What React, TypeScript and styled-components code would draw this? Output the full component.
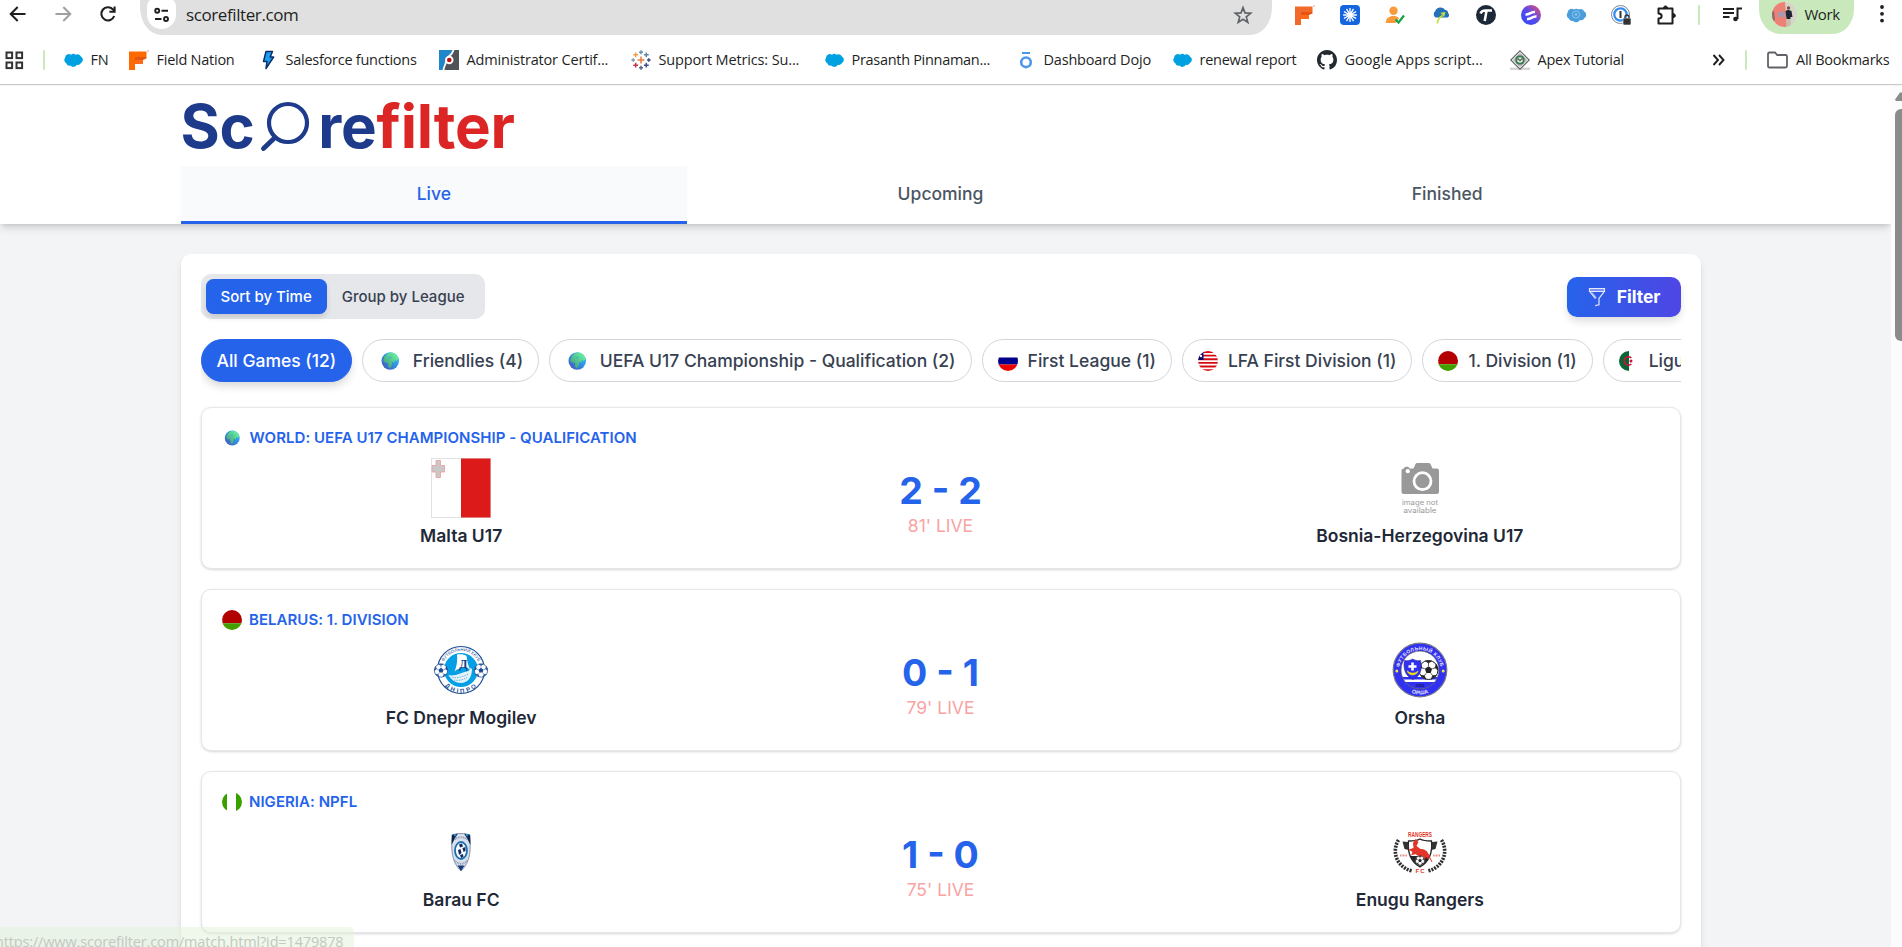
import React from "react";
import styled, { createGlobalStyle, css } from "styled-components";

const GlobalStyle = createGlobalStyle`
  * { box-sizing: border-box; }
  html, body { margin: 0; padding: 0; }
  body { background: #f3f4f6; overflow: hidden; font-family: Inter, sans-serif; }
  svg { display: block; flex: none; }
  button { font: inherit; border: 0; padding: 0; background: none; color: inherit; }
`;

const chromeFont = `"Open Sans", "Noto Sans", sans-serif`;

/* ---------- browser chrome ---------- */

const Window = styled.div`
  width: 1902px;
  height: 947px;
  display: flex;
  flex-direction: column;
  overflow: hidden;
  position: relative;
`;

const Toolbar = styled.div`
  height: 35px;
  flex: none;
  display: flex;
  align-items: flex-start;
  background: #fff;
  font-family: ${chromeFont};
`;

const NavButtons = styled.div`
  width: 140px;
  height: 28px;
  padding-left: 7.5px;
  display: flex;
  align-items: center;
  gap: 25px;
`;

const AddressBar = styled.div`
  width: 1132px;
  height: 35px;
  padding: 0 19px 6px 7px;
  display: flex;
  align-items: center;
  background: #e0e0e0;
  border-radius: 0 0 21px 21px / 0 0 28px 28px;
`;

const SiteInfo = styled.span`
  width: 29px;
  height: 29px;
  margin-right: 10px;
  display: flex;
  align-items: center;
  justify-content: center;
  background: #fff;
  border-radius: 4px 4px 15px 15px / 8px 8px 15px 15px;
`;

const Url = styled.span`
  flex: 1;
  font-size: 17px;
  letter-spacing: -0.4px;
  color: #1f1f1f;
  line-height: 29px;
`;

const Extensions = styled.div`
  height: 29px;
  margin-left: 23px;
  display: flex;
  align-items: center;
  gap: 25.2px;
`;

const Separator = styled.span<{ $gap?: string }>`
  width: 2.5px;
  height: 20px;
  flex: none;
  margin: ${(p) => p.$gap ?? "0"};
  background: #c9e9bd;
  border-radius: 2px;
`;

const Profile = styled.span`
  width: 95px;
  height: 34px;
  margin-left: 17px;
  padding: 0 0 6px 13px;
  display: flex;
  align-items: center;
  gap: 7px;
  background: #c9e9bd;
  border-radius: 0 0 21px 21px / 0 0 25px 25px;
  font-size: 15px;
  letter-spacing: -0.4px;
  color: #1f1f1f;
`;

const MenuDots = styled.span`
  height: 28px;
  width: 47px;
  display: flex;
  align-items: center;
  justify-content: center;
  padding-left: 8px;
`;

const BookmarkBar = styled.div`
  height: 50px;
  flex: none;
  display: flex;
  align-items: center;
  background: #fff;
  border-bottom: 1px solid #c8c8c8;
  font-family: ${chromeFont};
  font-size: 14.5px;
  color: #1f1f1f;
  padding: 1px 0 0 5px;
  margin-bottom: 1px;
`;

const Bookmark = styled.span<{ $w: number; $track?: number }>`
  width: ${(p) => p.$w}px;
  flex: none;
  display: flex;
  align-items: center;
  gap: 8px;
  white-space: nowrap;
  line-height: 20px;
  letter-spacing: ${(p) => p.$track ?? -0.25}px;
`;

const Overflow = styled.span`
  width: 36px;
  padding-left: 3px;
`;

/* ---------- page ---------- */

const Viewport = styled.div`
  flex: 1;
  min-height: 0;
  display: flex;
  background: #fff;
`;

const Page = styled.div`
  width: 1891px;
  display: flex;
  flex-direction: column;
  overflow: hidden;
  background: #f3f4f6;
`;

const Scrollbar = styled.div`
  width: 11px;
  padding: 6px 0 0 4px;
  background: #fcfcfc;
  display: flex;
  flex-direction: column;
  gap: 8px;
`;

const Thumb = styled.div`
  height: 232px;
  background: #8b8b8b;
  border-radius: 6px 0 0 6px;
`;

const Header = styled.header`
  height: 138px;
  flex: none;
  padding: 0 190.5px 0 180.5px;
  background: #fff;
  box-shadow: 0 5px 8px -1px rgba(0, 0, 0, 0.13), 0 2px 5px -2px rgba(0, 0, 0, 0.13);
  z-index: 1;
`;

const Logo = styled.div`
  height: 80px;
  padding-top: 10px;
  display: flex;
  font-size: 60px;
  line-height: 60px;
  font-weight: 700;
  letter-spacing: -0.2px;
  color: #1e3a8a;
`;

const LogoAccent = styled.span`
  color: #dc2626;
`;

const Tabs = styled.nav`
  display: grid;
  grid-template-columns: repeat(3, 1fr);
`;

const Tab = styled.button<{ $active?: boolean }>`
  height: 58px;
  font-size: 17.5px;
  line-height: 25px;
  font-weight: 500;
  color: ${(p) => (p.$active ? "#2563eb" : "#4b5563")};
  background: ${(p) => (p.$active ? "#f9fafc" : "transparent")};
  border-bottom: 3px solid ${(p) => (p.$active ? "#2563eb" : "transparent")};
`;

const Panel = styled.main`
  margin: 30px 190.5px 0 180.5px;
  padding: 20px;
  flex: none;
  height: 800px;
  display: flex;
  flex-direction: column;
  background: #fff;
  border-radius: 10px;
  box-shadow: 0 5px 8px -1px rgba(0, 0, 0, 0.1), 0 2px 5px -2px rgba(0, 0, 0, 0.1);
`;

const Controls = styled.div`
  height: 45px;
  display: flex;
  align-items: center;
  justify-content: space-between;
`;

const Toggle = styled.div`
  display: flex;
  padding: 5px;
  background: #e5e7eb;
  border-radius: 10px;
`;

const ToggleOption = styled.button<{ $active?: boolean }>`
  height: 35px;
  padding: 0 15px;
  border-radius: 7.5px;
  font-size: 15px;
  font-weight: 500;
  color: #374151;
  ${(p) =>
    p.$active &&
    css`
      color: #fff;
      background: #2563eb;
      box-shadow: 0 4px 6px -1px rgba(0, 0, 0, 0.15);
    `}
`;

const FilterButton = styled.button`
  height: 40px;
  padding: 0 20px;
  display: flex;
  align-items: center;
  gap: 10px;
  border-radius: 10px;
  font-size: 17.5px;
  font-weight: 700;
  color: #fff;
  background: linear-gradient(90deg, #2563eb, #4f46e5);
  box-shadow: 0 5px 8px -1px rgba(0, 0, 0, 0.14);
`;

const Pills = styled.div`
  height: 55px;
  margin: 20px 0 13px;
  display: flex;
  align-items: flex-start;
  gap: 10px;
  overflow: hidden;
`;

const Pill = styled.button<{ $active?: boolean }>`
  height: 43px;
  flex: none;
  padding: 0 15px;
  display: flex;
  align-items: center;
  gap: 10px;
  border: 1px solid #d1d5db;
  border-radius: 22px;
  font-size: 17.5px;
  font-weight: 500;
  white-space: nowrap;
  color: #374151;
  background: #fff;
  ${(p) =>
    p.$active &&
    css`
      color: #fff;
      background: #2563eb;
      border-color: #2563eb;
      box-shadow: 0 5px 8px -1px rgba(0, 0, 0, 0.16);
    `}
`;

const MatchList = styled.div`
  display: flex;
  flex-direction: column;
  gap: 20px;
`;

const MatchCard = styled.article`
  height: 162px;
  padding: 20px;
  border: 1px solid #e5e7eb;
  border-radius: 10px;
  background: #fff;
  box-shadow: 0 1px 3px rgba(0, 0, 0, 0.12), 0 1px 2px -1px rgba(0, 0, 0, 0.12);
`;

const League = styled.div`
  height: 20px;
  margin-bottom: 10px;
  display: flex;
  align-items: center;
  gap: 7.5px;
  font-size: 15px;
  line-height: 20px;
  font-weight: 600;
  letter-spacing: 0.04px;
  text-transform: uppercase;
  color: #2563eb;
`;

const MatchRow = styled.div`
  display: grid;
  grid-template-columns: repeat(3, 1fr);
  align-items: center;
`;

const Team = styled.div`
  display: flex;
  flex-direction: column;
  align-items: center;
  gap: 5px;
  font-size: 17.5px;
  line-height: 25px;
  font-weight: 600;
  color: #1f2937;
`;

const Score = styled.div`
  text-align: center;
  font-size: 37.5px;
  line-height: 45px;
  font-weight: 700;
  color: #2563eb;
`;

const Minute = styled.div`
  text-align: center;
  font-size: 17.5px;
  line-height: 25px;
  color: #f9a3a3;
`;

const StatusBubble = styled.div`
  position: absolute;
  left: 0;
  bottom: 0;
  z-index: 3;
  width: 354px;
  height: 20px;
  overflow: hidden;
  border-radius: 0 5px 0 0;
  background: rgba(226, 242, 219, 0.55);
  font-family: ${chromeFont};
  font-size: 14.5px;
  letter-spacing: -0.15px;
  line-height: 29px;
  white-space: nowrap;
  color: #c3c8c2;
`;

const StatusText = styled.span`
  margin-left: -5px;
`;

/* ---------- small icons ---------- */

const ArrowIcon = ({ flip, color }: { flip?: boolean; color: string }) => (
  <svg width="20" height="20" viewBox="0 0 20 20" fill="none" stroke={color} strokeWidth="2">
    <path d={flip ? "M2.5 10H17M10.3 3l7 7-7 7" : "M17.5 10H3M9.7 3l-7 7 7 7"} />
  </svg>
);

const ReloadIcon = () => (
  <svg width="20" height="20" viewBox="0 0 20 20" fill="none" stroke="#1f1f1f" strokeWidth="2.1">
    <path d="M16.2 12A6.6 6.6 0 1 1 14.8 5.3L16.5 7" />
    <path d="M16.6 2.5v5.2h-5.2" />
  </svg>
);

const TuneIcon = () => (
  <svg width="18" height="18" viewBox="0 0 18 18" fill="none" stroke="#1f1f1f" strokeWidth="1.9">
    <circle cx="4.2" cy="4.8" r="2" />
    <path d="M8.500 4.800h6.500M2 13h6.500" />
    <circle cx="13" cy="13" r="2" />
  </svg>
);

const StarIcon = () => (
  <svg width="20" height="20" viewBox="0 0 20 20" fill="none" stroke="#5f6368" strokeWidth="1.7">
    <path d="M10 2.600l2 5.300 5.700.4-4.400 3.600 1.500 5.500-4.800-3.100-4.800 3.100 1.500-5.500-4.400-3.600 5.700-.4z" />
  </svg>
);

const FieldNationIcon = ({ small }: { small?: boolean }) => (
  <svg width="20" height="20" viewBox="0 0 20 20">
    <path d="M0 1.5h17.5V7H0z" fill={small ? "#f26a2a" : "#ff6a00"} />
    <path d="M0 7h6v13H0z" fill={small ? "#f26a2a" : "#ff6a00"} />
    <path d="M6 9h8v5H6z" fill="#ff6a1a" />
    <path d="M6 7h11.5v1.6L13.8 10H6z" fill="#e4560f" />
    <circle cx="19" cy="1" r=".7" fill="#c88" />
  </svg>
);

const SunburstIcon = () => (
  <svg width="20" height="20" viewBox="0 0 20 20">
    <rect width="20" height="20" rx="4" fill="#1565e0" />
    <g stroke="#fff" strokeWidth="1.4" strokeLinecap="round">
      {[0, 30, 60, 90, 120, 150, 180, 210, 240, 270, 300, 330].map((a) => (
        <path key={a} d="M10 8V3.6" transform={`rotate(${a} 10 10)`} />
      ))}
    </g>
    <circle cx="10" cy="10" r="2.4" fill="#fff" />
  </svg>
);

const PersonCheckIcon = () => (
  <svg width="20" height="20" viewBox="0 0 20 20">
    <circle cx="8.5" cy="5.8" r="4.2" fill="#fb9a3c" />
    <path d="M.8 18c0-5 3.5-7 7.4-7 2.6 0 4.6.6 5.8 2.2L10.5 18z" fill="#fb9a3c" />
    <path d="M10.5 14.5l3 3 5.5-7" fill="none" stroke="#12a34a" strokeWidth="2.2" />
  </svg>
);

const CloudArrowIcon = () => (
  <svg width="20" height="20" viewBox="0 0 20 20">
    <path d="M4.500 12.500a3.800 3.800 0 0 1-.3-6.200A5.500 5.500 0 0 1 14 4.800a3.800 3.800 0 0 1 3.200 3.500 2.500 2.500 0 0 1-.6 4.200z" fill="#2570b8" />
    <path d="M6.500 18.500c0-4 1.500-6 5-8" fill="none" stroke="#c6e03a" strokeWidth="1.700" />
    <path d="M9.500 7.800l5-.8-1.500 5z" fill="#c6e03a" />
  </svg>
);

const TIcon = () => (
  <svg width="20" height="20" viewBox="0 0 20 20">
    <circle cx="10" cy="10" r="10" fill="#1d2939" />
    <path d="M4.500 8.500c1-3 3-3 5-3H16M10.500 6l-1.800 10" stroke="#fff" strokeWidth="2.500" fill="none" />
  </svg>
);

const PurpleIcon = () => (
  <svg width="20" height="20" viewBox="0 0 20 20">
    <defs>
      <linearGradient id="pg" x1="0" y1="1" x2="1" y2="0">
        <stop offset="0" stopColor="#2a4bff" />
        <stop offset=".5" stopColor="#5a4ae8" />
        <stop offset="1" stopColor="#f0506e" />
      </linearGradient>
    </defs>
    <circle cx="10" cy="10" r="10" fill="url(#pg)" />
    <path d="M4.500 9.500c4 .5 5-3 9.500-2.500M6 14c4 .5 5-3 9.500-2.500" stroke="#fff" strokeWidth="2.600" fill="none" />
  </svg>
);

const cloudPath =
  "M7.800 4.600A4 4 0 0 1 12.600 4.500a4 4 0 0 1 5.600 1.900 3.800 3.800 0 0 1 .3 6.600 3.900 3.900 0 0 1-4.600 2 4.200 4.200 0 0 1-6.800 1 4 4 0 0 1-4.300-2.600A3.700 3.700 0 0 1 1.600 7.800a3.900 3.900 0 0 1 6.200-3.200z";

const CloudIcon = () => (
  <svg width="20" height="20" viewBox="-0.600 -0.400 21 21">
    <path d={cloudPath} fill="#00a1e0" />
  </svg>
);

const PaleCloudIcon = () => (
  <svg width="20" height="20" viewBox="0 0 20 20">
    <path d={cloudPath} fill="#4a9edb" />
    <circle cx="10" cy="9.500" r="3.600" fill="none" stroke="#8cc4ec" />
    <circle cx="10" cy="9.500" r="1.300" fill="#8cc4ec" />
  </svg>
);

const VaultIcon = () => (
  <svg width="20" height="20" viewBox="0 0 20 20">
    <circle cx="9.500" cy="9.500" r="9" fill="#fff" stroke="#7c8794" />
    <circle cx="9.500" cy="9.500" r="6.200" fill="none" stroke="#2f8df5" strokeWidth="2.200" />
    <path d="M9.500 6v7" stroke="#333" strokeWidth="2" />
    <rect x="12" y="13" width="8" height="7" rx="1" fill="#333" stroke="#fff" strokeWidth=".6" />
    <path d="M14 13v-1a2 2 0 0 1 4 0v1" fill="none" stroke="#333" strokeWidth="1.300" />
  </svg>
);

const PuzzleIcon = () => (
  <svg width="20" height="20" viewBox="0 0 20 20" fill="none" stroke="#1f1f1f" strokeWidth="2" strokeLinejoin="round">
    <path d="M1.500 3.500h14v15h-14v-5c4.200 0 4.200-5 0-5z" />
    <path d="M6.500 3.200c0-3 4-3 4 0z" fill="#1f1f1f" strokeWidth="1" />
    <path d="M16 8.600c3.200 0 3.200 4 0 4z" fill="#1f1f1f" strokeWidth="1" />
  </svg>
);

const QueueMusicIcon = () => (
  <svg width="20" height="20" viewBox="0 0 20 20" fill="none" stroke="#1f1f1f" strokeWidth="2">
    <path d="M1 4h11M1 8h11M1 12h6.500" />
    <path d="M15.500 14V3.500H20" />
    <circle cx="13.500" cy="14" r="2.300" fill="#1f1f1f" stroke="none" />
  </svg>
);

const Avatar = () => (
  <svg width="25" height="25" viewBox="0 0 25 25">
    <clipPath id="av"><circle cx="12.500" cy="12.500" r="12.500" /></clipPath>
    <g clipPath="url(#av)">
      <rect width="25" height="25" fill="#d9d4c9" />
      <path d="M0 0h13l2 25H0z" fill="#ee8176" />
      <rect x="6" y="10" width="7" height="5" fill="#a79ab0" />
      <path d="M13.500 9l2.500-1.200L19.500 9l1 6h-2v2h-4z" fill="#1d2432" />
      <circle cx="16.500" cy="6" r="1.700" fill="#7a5044" />
      <path d="M14.500 17h4l.5 8h-5z" fill="#c7bfae" />
      <path d="M0 10l2-1 1 9-3 2z" fill="#8e6a6a" />
    </g>
  </svg>
);

const DotsIcon = () => (
  <svg width="6" height="20" viewBox="0 0 6 20" fill="#1f1f1f">
    <circle cx="3" cy="3" r="1.900" /><circle cx="3" cy="9.800" r="1.900" /><circle cx="3" cy="16.600" r="1.900" />
  </svg>
);

const AppsIcon = () => (
  <svg width="19" height="19" viewBox="0 0 19 19" fill="none" stroke="#333" strokeWidth="2">
    <rect x="1.500" y="1.500" width="5.600" height="5.600" /><rect x="11.500" y="1.500" width="5.600" height="5.600" />
    <rect x="1.500" y="11.500" width="5.600" height="5.600" /><rect x="11.500" y="11.500" width="5.600" height="5.600" />
  </svg>
);

const BoltIcon = () => (
  <svg width="20" height="20" viewBox="0 0 20 20">
    <path d="M8 1.500h6.500L12.200 7H15.600L8 18.500l1-7H5.500z" fill="#1ba0f0" stroke="#0b2f6b" strokeWidth="1.500" strokeLinejoin="round" />
  </svg>
);

const AdminIcon = () => (
  <svg width="20" height="20" viewBox="0 0 20 20">
    <rect width="20" height="20" fill="#4f5357" />
    <path d="M0 0h15L8 9 5 20H0z" fill="#1d87c9" />
    <path d="M14.500 0C13 6 8 6 7.500 10c-.3 4-3 7-3 10" fill="none" stroke="#fff" strokeWidth="1.800" />
    <circle cx="10.300" cy="10" r="4.200" fill="#fff" />
    <circle cx="10.300" cy="10" r="2.300" fill="#c00d12" />
  </svg>
);

const TableauIcon = () => {
  const plus = (x: number, y: number, r: number, c: string) => (
    <path key={`${x}-${y}`} d={`M${x - r} ${y}h${2 * r}M${x} ${y - r}v${2 * r}`} stroke={c} strokeWidth="1.500" />
  );
  return (
    <svg width="20" height="20" viewBox="0 0 20 20">
      {plus(10, 10, 3.4, "#eb7a3c")}
      {plus(10, 2.2, 2, "#6f93a8")}
      {plus(10, 17.8, 2, "#5a6591")}
      {plus(2.2, 10, 1.8, "#7ba0b5")}
      {plus(17.8, 10, 1.8, "#3c4f8a")}
      {plus(4.7, 4.8, 2.4, "#f0a04a")}
      {plus(15.3, 4.8, 2.4, "#5f8ba0")}
      {plus(4.7, 15.2, 2.4, "#c8334c")}
      {plus(15.3, 15.2, 2.4, "#3c4f8a")}
    </svg>
  );
};

const DojoIcon = () => (
  <svg width="20" height="20" viewBox="0 0 20 20" fill="none" stroke="#4d96ea">
    <path d="M6 3h8" strokeWidth="2" />
    <ellipse cx="10" cy="12.300" rx="4.800" ry="4.800" strokeWidth="2.600" />
  </svg>
);

const GithubIcon = () => (
  <svg width="20" height="20" viewBox="0 0 16 16" fill="#24292f">
    <path d="M8 0C3.580 0 0 3.580 0 8c0 3.540 2.290 6.530 5.470 7.590.4.070.55-.17.55-.38 0-.19-.01-.82-.01-1.490-2.010.37-2.530-.49-2.690-.94-.09-.23-.48-.94-.82-1.130-.28-.15-.68-.52-.01-.53.63-.01 1.080.58 1.230.82.72 1.210 1.870.87 2.330.66.07-.52.28-.87.51-1.070-1.780-.2-3.640-.89-3.640-3.950 0-.87.31-1.590.82-2.150-.08-.2-.36-1.020.08-2.120 0 0 .67-.21 2.200.82.64-.18 1.320-.27 2-.27s1.360.09 2 .27c1.530-1.040 2.200-.82 2.200-.82.44 1.100.16 1.920.08 2.120.51.56.82 1.270.82 2.150 0 3.070-1.870 3.750-3.650 3.950.29.25.54.73.54 1.480 0 1.070-.01 1.930-.01 2.200 0 .21.15.46.55.38A8.010 8.010 0 0 0 16 8c0-4.420-3.580-8-8-8z" />
  </svg>
);

const ApexIcon = () => (
  <svg width="20" height="20" viewBox="0 0 20 20">
    <rect y="17.500" width="20" height="2.500" fill="#d5d5d5" />
    <path d="M10 .8l9.200 9.200-9.200 9.200L.8 10z" fill="#fff" stroke="#666" strokeWidth="1.200" />
    <path d="M10 3.500l6.500 6.500-6.500 6.500L3.500 10z" fill="#dfe8e0" stroke="#777" strokeWidth=".8" />
    <circle cx="10" cy="10" r="3.800" fill="none" stroke="#3c7a50" strokeWidth="2" />
    <path d="M7.500 8.500l2.500 2 2.500-2" fill="none" stroke="#555" strokeWidth="1.200" />
  </svg>
);

const ChevronsIcon = () => (
  <svg width="13" height="12" viewBox="0 0 13 12" fill="none" stroke="#1f1f1f" strokeWidth="1.900">
    <path d="M1.500 1l4.500 5-4.500 5M7 1l4.500 5L7 11" />
  </svg>
);

const FolderIcon = () => (
  <svg width="21" height="18" viewBox="0 0 21 18" fill="none" stroke="#5f6368" strokeWidth="1.800">
    <path d="M1 3.200C1 2 1.500 1.500 2.600 1.500H8L10.200 4h8.300c1 0 1.500.5 1.500 1.500v9.500c0 1-.5 1.500-1.500 1.500h-16c-1 0-1.500-.5-1.500-1.500z" />
  </svg>
);

/* ---------- site icons ---------- */

const Magnifier = () => (
  <svg width="63.500" height="60" viewBox="0 0 63.500 60" fill="none" stroke="#1e3a8a" strokeLinecap="round">
    <circle cx="33" cy="27" r="19" strokeWidth="4.200" />
    <path d="M20 41.500L8.500 52.500" strokeWidth="4.800" />
  </svg>
);

const FunnelIcon = () => (
  <svg width="20" height="20" viewBox="0 0 20 20" fill="none" stroke="#e3e8ff" strokeWidth="1.200">
    <path d="M2.500 1.500h15v3h-15z" fill="#7f92f2" />
    <path d="M3 4.800l5.500 6.700M17 4.800l-5 6.700v6.300l-3.800.9" />
    <path d="M5 5.500l4.500 5.500" opacity=".5" />
  </svg>
);

const Globe = ({ box, size }: { box: number; size: number }) => (
  <svg width={box} height="20" viewBox={`${-box / 2} -10 ${box} 20`}>
    <defs>
      <linearGradient id="sea" x1="0" y1="1" x2="1" y2="0">
        <stop offset="0" stopColor="#4a4cb8" />
        <stop offset=".5" stopColor="#2f8fe0" />
        <stop offset="1" stopColor="#35c6ff" />
      </linearGradient>
      <linearGradient id="land" x1="0" y1="1" x2="1" y2="0">
        <stop offset="0" stopColor="#3f8f7a" />
        <stop offset="1" stopColor="#6dffa6" />
      </linearGradient>
    </defs>
    <g transform={`scale(${size / 20})`}>
      <circle r="10" fill="url(#sea)" />
      <path d="M-7-4C-5-8-1-10 2-9.700c4 .7 7 4 7.500 8L7 0 5-1l0 3-3-1C2 5 1 8-1 8c-2-1-1-4-2-6-3 0-5-1-5-3z" fill="url(#land)" />
      <path d="M-3-4l3-1 2 1-2 1z" fill="#3bb5c9" />
    </g>
  </svg>
);

type FlagName = "world" | "slovenia" | "liberia" | "belarus" | "algeria" | "nigeria";

const flagArt: Record<Exclude<FlagName, "world">, React.ReactNode> = {
  slovenia: (
    <>
      <path d="M0 0h20v6.500H0z" fill="#fff" />
      <path d="M0 6.500h20v7H0z" fill="#00008b" />
      <path d="M0 13.500h20V20H0z" fill="#f00000" />
    </>
  ),
  liberia: (
    <>
      <path d="M0 0h20v20H0z" fill="#fff" />
      {[0, 1, 2, 3, 4, 5].map((i) => (
        <path key={i} d={`M0 ${i * 3.64}h20v1.900H0z`} fill="#d40a12" />
      ))}
      <path d="M0 0h5.500v9H0z" fill="#0b0b6b" />
      <circle cx="3" cy="5" r="1.200" fill="#fff" />
    </>
  ),
  belarus: (
    <>
      <path d="M0 0h20v13.200H0z" fill="#b30000" />
      <path d="M0 13.200h20V20H0z" fill="#429f00" />
      <path d="M.6 0v20" stroke="#d98080" strokeDasharray="1 1" />
    </>
  ),
  algeria: (
    <>
      <path d="M0 0h10v20H0z" fill="#0a6536" />
      <path d="M10 0h10v20H10z" fill="#fff" />
      <path d="M12.300 7A4.200 4.200 0 1 0 12.300 13" fill="none" stroke="#d21034" strokeWidth="1.700" />
      <circle cx="12" cy="10" r="1.500" fill="#d21034" />
    </>
  ),
  nigeria: (
    <>
      <path d="M0 0h20v20H0z" fill="#fff" />
      <path d="M0 0h5v20H0zM14 0h6v20h-6z" fill="#37a100" />
    </>
  ),
};

const Flag = ({ name, inPill }: { name: FlagName; inPill?: boolean }) =>
  name === "world" ? (
    <Globe box={inPill ? 24.5 : 20.5} size={inPill ? 17.5 : 15} />
  ) : (
    <svg width="20" height="20" viewBox="0 0 20 20">
      <clipPath id={`flag-${name}`}><circle cx="10" cy="10" r="10" /></clipPath>
      <g clipPath={`url(#flag-${name})`}>{flagArt[name]}</g>
    </svg>
  );

const Ball = ({ x, y, r, c }: { x: number; y: number; r: number; c: string }) => (
  <g transform={`translate(${x} ${y}) scale(${r / 10})`}>
    <circle r="9.500" fill="#fff" stroke={c} strokeWidth="1" />
    <path d="M0-3.800l3.600 2.600L2.200 3h-4.400L-3.600-1.200z" fill={c} />
    {[0, 72, 144, 216, 288].map((a) => (
      <path key={a} d="M0-4V-7M-3-9L0-7l3-2z" fill={c} stroke={c} strokeWidth=".7" transform={`rotate(${a})`} />
    ))}
  </g>
);

const MaltaCrest = () => (
  <svg width="60" height="60" viewBox="0 0 60 60">
    <rect x=".5" y=".5" width="59" height="59" fill="#fff" stroke="#e2e2e2" />
    <path d="M30 .5h29.500v59H30z" fill="#dd1a1a" />
    <path d="M5 2.500h4.500v5h4V14h-4v5.500H5V14H1V7.500h4z" fill="#c8c8c8" stroke="#f0a0a0" strokeWidth=".9" />
  </svg>
);

const MissingCrest = () => (
  <svg width="60" height="60" viewBox="0 0 60 60">
    <path d="M14 10.500c0-2.200 5.500-2.200 5.500 0h4l1.800-4c.5-1 1-1.500 2-1.500h11.400c1 0 1.500.5 2 1.500l1.800 4H46.500c1.800 0 2.500.8 2.500 2.500v20.500c0 1.700-.8 2.500-2.500 2.500H14c-1.700 0-2.500-.8-2.500-2.500V13c0-1.600.7-2.500 2.500-2.500z" fill="#999" />
    <circle cx="17.800" cy="13.200" r="2.100" fill="#fff" />
    <circle cx="32.500" cy="23.200" r="8.500" fill="#999" stroke="#fff" strokeWidth="2.800" />
    <g fill="#999" fontFamily="Inter, sans-serif" fontSize="7.300" fontWeight="400" textAnchor="middle">
      <text x="30" y="47" textLength="36" lengthAdjust="spacingAndGlyphs">image not</text>
      <text x="30" y="55.200" textLength="33" lengthAdjust="spacingAndGlyphs">available</text>
    </g>
  </svg>
);

const DneprCrest = () => (
  <svg width="60" height="60" viewBox="0 0 60 60">
    <defs>
      <path id="dn-top" d="M11 30a19 19 0 0 1 38 0" />
      <path id="dn-bot" d="M8 31a22 22 0 0 0 44 0" />
    </defs>
    <circle cx="30" cy="30" r="23.500" fill="#fff" stroke="#1a4b94" strokeWidth="1.200" />
    <circle cx="30" cy="30" r="17" fill="#049fe4" />
    <path d="M26 14.500c4-.5 8 0 9.500 1.500 1 6 1.500 9 3.500 13-5-2-11-2-15.500 2.500C26 26 26.500 20 26 14.500z" fill="#fff" />
    <path d="M17.500 35c6 2 14-3 20-4l2-3 1.500 1c0 9-5 14-11 14-5 0-10-3-12.500-8z" fill="#e3f3fb" />
    <path d="M21 37c5 2 12-1 17-3M23 40c4 1 9 0 13-2.500" stroke="#6ab5dd" fill="none" strokeDasharray="1.500 1" />
    <text x="32.500" y="28" fontFamily="Liberation Serif, serif" fontSize="12" fontWeight="700" textAnchor="middle" fill="#123f87">Д</text>
    <text fontFamily="Liberation Sans, sans-serif" fontSize="4.400" fontWeight="400" fill="#1a4b94">
      <textPath href="#dn-top" startOffset="50%" textAnchor="middle">ФУТБОЛЬНИЙ КЛУБ</textPath>
    </text>
    <text fontFamily="Liberation Sans, sans-serif" fontSize="6" fontWeight="700" fill="#1a4b94" letterSpacing="2.400">
      <textPath href="#dn-bot" startOffset="51%" textAnchor="middle">ДНІПРО</textPath>
    </text>
    <Ball x={10} y={30.5} r={7} c="#1a4b94" />
    <Ball x={50} y={30.5} r={7} c="#1a4b94" />
  </svg>
);

const OrshaCrest = () => (
  <svg width="60" height="60" viewBox="0 0 60 60">
    <defs>
      <path id="or-top" d="M9.200 34a21 21 0 1 1 41.600 0" />
      <path id="or-bot" d="M5.500 30a24.500 24.500 0 0 0 49 0" />
      <clipPath id="or-in"><circle cx="30" cy="30" r="19" /></clipPath>
    </defs>
    <circle cx="30" cy="30" r="26.800" fill="#3131f2" stroke="#77778a" strokeWidth="1.200" />
    <g clipPath="url(#or-in)">
      <rect width="60" height="60" fill="#fff" />
      <path d="M10 37h40v15H10z" fill="#3131f2" />
      <path d="M10 39.500h40v2.500H10z" fill="#fff" />
    </g>
    <circle cx="30" cy="30" r="19" fill="none" stroke="#555" strokeWidth=".7" />
    <Ball x={38.5} y={30} r={10} c="#222" />
    <path d="M14.500 20.500c5 1 8-1.500 8-1.500s4 2.500 8 1.500c1.500 8 1 15-7.500 19C15 36 13 28 14.500 20.500z" fill="#3131f2" stroke="#22228a" strokeWidth=".6" />
    <path d="M22.500 22.500v8M18.500 26.500h8" stroke="#fff" strokeWidth="2.600" />
    <path d="M17.500 31c1 5 9 5 10.500 0-2.500 3-8 3-10.500 0z" fill="#ffe800" stroke="#ffe800" strokeWidth=".8" />
    <g fontFamily="Liberation Sans, sans-serif" fontWeight="700" fill="#e6e6ff">
      <text fontSize="5" letterSpacing=".4"><textPath href="#or-top" startOffset="50%" textAnchor="middle">ФУТБОЛЬНЫЙ КЛУБ</textPath></text>
      <text fontSize="5.500"><textPath href="#or-bot" startOffset="50%" textAnchor="middle">ОРША</textPath></text>
    </g>
    <text x="30" y="46.500" fontFamily="Liberation Sans, sans-serif" fontSize="4" textAnchor="middle" fill="#15155a">1956</text>
    <circle cx="6.800" cy="31" r="1.500" fill="#f5e642" />
    <circle cx="53.200" cy="31" r="1.500" fill="#f5e642" />
  </svg>
);

const BarauCrest = () => (
  <svg width="60" height="60" viewBox="0 0 60 60">
    <path d="M21.500 13c3-1 4-1.500 8.500-1.500s5.500.5 8.500 1.500c1.500 13 1.500 27-8.500 36-10-9-10-23-8.500-36z" fill="#d9e2ec" stroke="#6e7b98" strokeWidth=".8" />
    <path d="M20.800 12.800l6-1-2.500 4-3.700 7zM39.200 12.800l-6-1 2.500 4 3.700 7z" fill="#0f2350" />
    <path d="M22.500 12.500l3-.5-1.500 3zM37.500 12.500l-3-.5 1.500 3z" fill="#1aa3d8" />
    <path d="M26.500 43.500h7L30 49z" fill="#14397a" />
    <path d="M24 17.500c3-3 9-3 12 0M23.500 38c3 5 10 5 13 0" fill="none" stroke="#8f9dba" strokeWidth="2" strokeDasharray="1 .7" />
    <ellipse cx="30" cy="28.500" rx="6" ry="8.500" fill="#fff" stroke="#1d6fae" strokeWidth="1.800" />
    <path d="M28 22.500l3-1 1 3-3 1zM27 28l2.500-1 1 4-2.500 2zM31.500 26l3-1v4l-2 1zM29 33l3-1 .5 3-2.500 1z" fill="#102a66" />
  </svg>
);

const RangersCrest = () => (
  <svg width="60" height="60" viewBox="0 0 60 60">
    <path d="M18.500 19c5 0 9-.5 11.500-2 2.500 1.500 6.500 2 11.500 2 1 10-1 20-11.500 26-10.500-6-12.500-16-11.500-26z" fill="#fff" stroke="#262626" strokeWidth="1.300" />
    <path d="M20 34h20c-2 4-5 7-10 10-5-3-8-6-10-10z" fill="#262626" />
    <path d="M12.500 19.500l5.500.5.500 8-4-1zM47.500 19.500l-5.500.5-.5 8 4-1z" fill="#333" />
    <path d="M25.500 17l3 3-2 4 4 3c4 0 7 2 8 5l.5 6-3-3-2 4-2-4.500c-3 0-5-1-6.500-2.500l-4.500 1.500 1.500-3.500-4-2.500 5-1.500-.5-5z" fill="#e2362b" />
    <path d="M38 32l4 8" stroke="#e2362b" />
    <Ball x={30} y={38.5} r={4.8} c="#262626" />
    <g fill="none" stroke="#2e2e2e" strokeWidth="3.600" strokeDasharray="2 1.100">
      <path d="M8.500 18C2.500 27 4 44 22 49" />
      <path d="M51.500 18C57.500 27 56 44 38 49" />
    </g>
    <g fill="#e2362b" fontFamily="Liberation Sans, sans-serif" fontWeight="700" textAnchor="middle">
      <text x="30" y="14.500" fontSize="7.500" textLength="24" lengthAdjust="spacingAndGlyphs">RANGERS</text>
      <text x="30.500" y="51" fontSize="6" letterSpacing="1">FC</text>
    </g>
    <path d="M10 33.500h7M43 33.500h7" stroke="#e88a82" strokeWidth="2" strokeDasharray="1 .5" />
  </svg>
);

/* ---------- data ---------- */

const bookmarks: { label: string; icon: React.ReactNode; w: number; track?: number }[] = [
  { label: "FN", icon: <CloudIcon />, w: 66 },
  { label: "Field Nation", icon: <FieldNationIcon />, w: 129 },
  { label: "Salesforce functions", icon: <BoltIcon />, w: 181 },
  { label: "Administrator Certif...", icon: <AdminIcon />, w: 192, track: -0.17 },
  { label: "Support Metrics: Su...", icon: <TableauIcon />, w: 193, track: -0.14 },
  { label: "Prasanth Pinnaman...", icon: <CloudIcon />, w: 192, track: -0.3 },
  { label: "Dashboard Dojo", icon: <DojoIcon />, w: 156, track: -0.2 },
  { label: "renewal report", icon: <CloudIcon />, w: 145, track: -0.26 },
  { label: "Google Apps script...", icon: <GithubIcon />, w: 193, track: 0.02 },
  { label: "Apex Tutorial", icon: <ApexIcon />, w: 199 },
];

const leagues: { label: string; flag?: FlagName }[] = [
  { label: "All Games (12)" },
  { label: "Friendlies (4)", flag: "world" },
  { label: "UEFA U17 Championship - Qualification (2)", flag: "world" },
  { label: "First League (1)", flag: "slovenia" },
  { label: "LFA First Division (1)", flag: "liberia" },
  { label: "1. Division (1)", flag: "belarus" },
  { label: "Ligue 1 (1)", flag: "algeria" },
];

const matches: {
  league: string; flag: FlagName; score: string; minute: string;
  home: string; homeCrest: React.ReactNode; away: string; awayCrest: React.ReactNode;
}[] = [
  { league: "World: UEFA U17 Championship - Qualification", flag: "world", score: "2 - 2", minute: "81' LIVE", home: "Malta U17", homeCrest: <MaltaCrest />, away: "Bosnia-Herzegovina U17", awayCrest: <MissingCrest /> },
  { league: "Belarus: 1. Division", flag: "belarus", score: "0 - 1", minute: "79' LIVE", home: "FC Dnepr Mogilev", homeCrest: <DneprCrest />, away: "Orsha", awayCrest: <OrshaCrest /> },
  { league: "Nigeria: NPFL", flag: "nigeria", score: "1 - 0", minute: "75' LIVE", home: "Barau FC", homeCrest: <BarauCrest />, away: "Enugu Rangers", awayCrest: <RangersCrest /> },
];

export default function App() {
  return (
    <Window>
      <GlobalStyle />
      <Toolbar>
        <NavButtons>
          <ArrowIcon color="#1f1f1f" />
          <ArrowIcon flip color="#a0a0a0" />
          <ReloadIcon />
        </NavButtons>
        <AddressBar>
          <SiteInfo><TuneIcon /></SiteInfo>
          <Url>scorefilter.com</Url>
          <StarIcon />
        </AddressBar>
        <Extensions>
          <FieldNationIcon small />
          <SunburstIcon />
          <PersonCheckIcon />
          <CloudArrowIcon />
          <TIcon />
          <PurpleIcon />
          <PaleCloudIcon />
          <VaultIcon />
          <PuzzleIcon />
          <Separator $gap="0 -3px 0 -4px" />
          <QueueMusicIcon />
        </Extensions>
        <Profile><Avatar />Work</Profile>
        <MenuDots><DotsIcon /></MenuDots>
      </Toolbar>
      <BookmarkBar>
        <AppsIcon />
        <Separator $gap="0 17.5px 0 18.5px" />
        {bookmarks.map((b) => (
          <Bookmark key={b.label} $w={b.w} $track={b.track}>{b.icon}{b.label}</Bookmark>
        ))}
        <Overflow><ChevronsIcon /></Overflow>
        <Separator $gap="0 20px 0 0" />
        <Bookmark $w={130}><FolderIcon />All Bookmarks</Bookmark>
      </BookmarkBar>
      <Viewport>
        <Page>
          <Header>
            <Logo>Sc<Magnifier />re<LogoAccent>filter</LogoAccent></Logo>
            <Tabs>
              <Tab $active>Live</Tab>
              <Tab>Upcoming</Tab>
              <Tab>Finished</Tab>
            </Tabs>
          </Header>
          <Panel>
            <Controls>
              <Toggle>
                <ToggleOption $active>Sort by Time</ToggleOption>
                <ToggleOption>Group by League</ToggleOption>
              </Toggle>
              <FilterButton><FunnelIcon />Filter</FilterButton>
            </Controls>
            <Pills>
              {leagues.map((l, i) => (
                <Pill key={l.label} $active={i === 0}>
                  {l.flag && <Flag name={l.flag} inPill />}
                  {l.label}
                </Pill>
              ))}
            </Pills>
            <MatchList>
              {matches.map((m) => (
                <MatchCard key={m.league}>
                  <League><Flag name={m.flag} />{m.league}</League>
                  <MatchRow>
                    <Team>{m.homeCrest}{m.home}</Team>
                    <div>
                      <Score>{m.score}</Score>
                      <Minute>{m.minute}</Minute>
                    </div>
                    <Team>{m.awayCrest}{m.away}</Team>
                  </MatchRow>
                </MatchCard>
              ))}
            </MatchList>
          </Panel>
        </Page>
        <Scrollbar>
          <svg width="7" height="9" viewBox="0 0 7 9"><path d="M0 7.500L5 .5h2V9H1z" fill="#8b8b8b" /></svg>
          <Thumb />
        </Scrollbar>
      </Viewport>
      <StatusBubble><StatusText>https://www.scorefilter.com/match.html?id=1479878</StatusText></StatusBubble>
    </Window>
  );
}
